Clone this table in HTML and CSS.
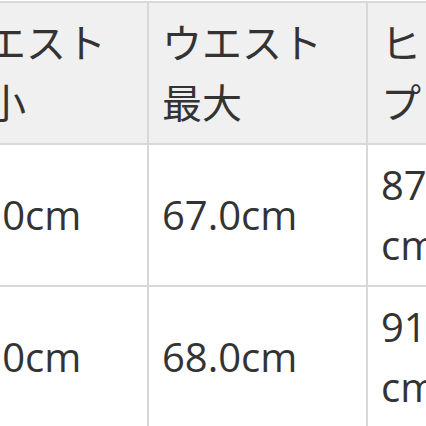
FILE: index.html
```html
<!DOCTYPE html>
<html lang="ja">
<head>
<meta charset="utf-8">
<link rel="stylesheet" href="styles.css">
</head>
<body>
<table class="size-table">
  <colgroup>
    <col class="c1"><col class="c2"><col class="c3">
  </colgroup>
  <thead>
    <tr>
      <th>ウエスト最小</th>
      <th>ウエスト最大</th>
      <th>ヒップ</th>
    </tr>
  </thead>
  <tbody>
    <tr>
      <td>62.0cm</td>
      <td>67.0cm</td>
      <td>87.0cm</td>
    </tr>
    <tr>
      <td>64.0cm</td>
      <td>68.0cm</td>
      <td>91.0cm</td>
    </tr>
  </tbody>
</table>
</body>
</html>
```
FILE: styles.css
```css
html, body {
  margin: 0;
  padding: 0;
  background: #ffffff;
  overflow: hidden;
}
.size-table {
  margin: 1px 0 0 -69px;
  border-collapse: collapse;
  table-layout: fixed;
  width: 553px;
  font-family: "Open Sans", "Noto Sans CJK JP", sans-serif;
  font-size: 40px;
  line-height: 60px;
  color: #333333;
}
.c1 { width: 216px; }
.c2 { width: 219px; }
.c3 { width: 118px; }
.size-table th,
.size-table td {
  border: 2px solid #d8d8d8;
  padding: 10px 12px 10px 13px;
  text-align: left;
  vertical-align: middle;
  font-weight: 400;
  word-break: break-all;
}
.size-table th {
  background: #f0f0f0;
}
```
